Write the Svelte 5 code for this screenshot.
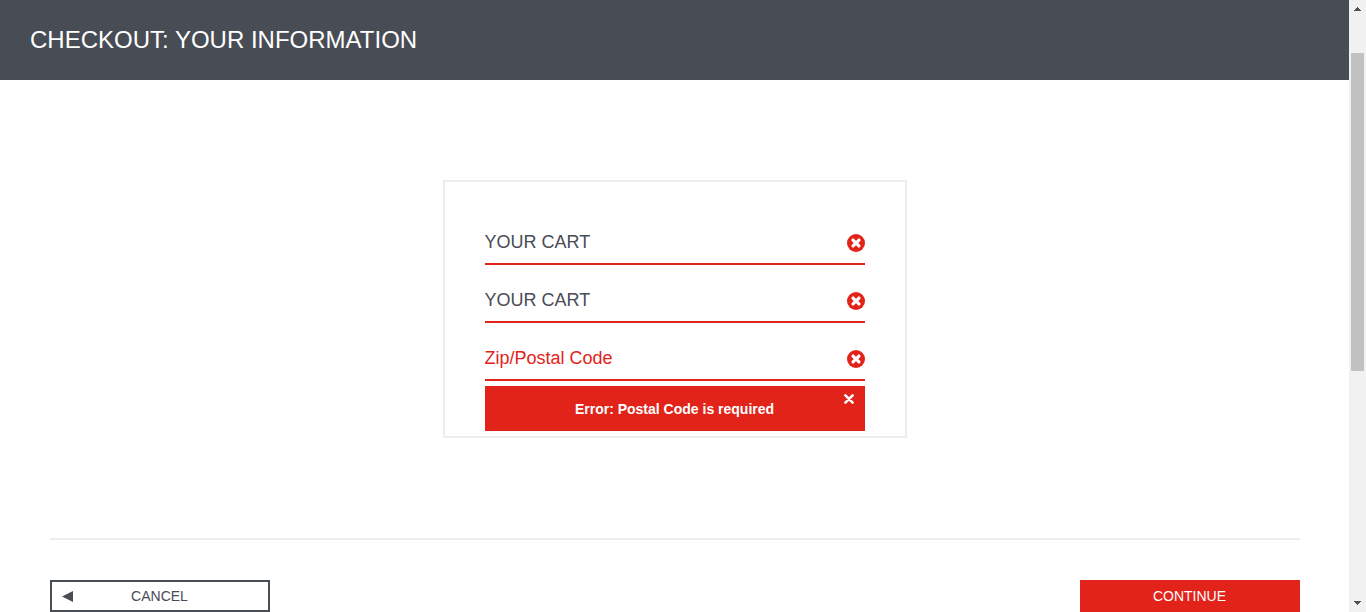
<script>
  let fields = $state([
    { id: 'first-name', label: 'First Name', value: 'YOUR CART' },
    { id: 'last-name', label: 'Last Name', value: 'YOUR CART' },
    { id: 'postal-code', label: 'Zip/Postal Code', value: '' }
  ]);
  let error = $state('Error: Postal Code is required');
</script>

<div class="page">
  <div class="content">
    <header>
      <h1>CHECKOUT: YOUR INFORMATION</h1>
    </header>

    <main>
      <form id="checkout" onsubmit={(e) => e.preventDefault()}>
        {#each fields as field (field.id)}
          <div class="field">
            <input
              id={field.id}
              type="text"
              aria-label={field.label}
              placeholder={field.label}
              bind:value={field.value}
            />
            <svg class="invalid" viewBox="8 8 496 496" aria-hidden="true">
              <circle cx="256" cy="256" r="248" fill="currentColor" />
              <path stroke="#fff" stroke-width="88" stroke-linecap="round" d="M174 174l164 164M338 174L174 338" />
            </svg>
          </div>
        {/each}
        {#if error}
          <div class="error" role="alert">
            <strong>{error}</strong>
            <button type="button" class="dismiss" aria-label="Dismiss" onclick={() => (error = '')}>
              <svg viewBox="0 0 10 10" aria-hidden="true">
                <path stroke="currentColor" stroke-width="2.6" stroke-linecap="round" d="M1.4 1.4l7.2 7.2M8.6 1.4L1.4 8.6" />
              </svg>
            </button>
          </div>
        {/if}
      </form>

      <footer>
        <button type="button" class="action cancel">
          <svg viewBox="0 0 10 10" aria-hidden="true"><path fill="currentColor" d="M10 0v10L0 5z" /></svg>
          <span>CANCEL</span>
        </button>
        <button type="submit" form="checkout" class="action continue">CONTINUE</button>
      </footer>
    </main>
  </div>

  <div class="scrollbar" aria-hidden="true">
    <svg class="arrow" viewBox="0 0 17 17" shape-rendering="crispEdges">
      <path fill="#505050" d="M8 7h1v1h1v1h1v1h1v1H5v-1h1V9h1V8h1z" />
    </svg>
    <div class="track"><div class="thumb"></div></div>
    <svg class="arrow" viewBox="0 0 17 17" shape-rendering="crispEdges">
      <path fill="#505050" d="M5 6h7v1h-1v1h-1v1H9v1H8V9H7V8H6V7H5z" />
    </svg>
  </div>
</div>

<style>
  :global(body) {
    margin: 0;
    background: #fff;
  }

  .page {
    display: flex;
    min-height: 100vh;
    font-family: "Liberation Sans", Arial, sans-serif;
    color: #484c55;
  }

  .content {
    flex: 1;
    min-width: 0;
  }

  header {
    display: flex;
    align-items: center;
    height: 80px;
    padding: 0 30px;
    background: #484c55;
  }

  h1 {
    margin: 0;
    font-size: 24px;
    line-height: 28px;
    font-weight: 400;
    color: #fff;
  }

  main {
    max-width: 1250px;
    margin: 0 auto;
    padding-top: 100px;
  }

  form {
    box-sizing: border-box;
    max-width: 464px;
    margin: 0 auto;
    padding: 41px 40px 5px;
    border: 2px solid #ededed;
  }

  .field {
    display: flex;
    align-items: center;
    height: 40px;
    border-bottom: 2px solid #e2231a;
    color: #e2231a;
  }

  .field + .field {
    margin-top: 16px;
  }

  input {
    flex: 1;
    min-width: 0;
    padding: 0 0 2px;
    border: 0;
    outline: 0;
    background: transparent;
    font: inherit;
    font-size: 18px;
    color: #484c55;
  }

  input::placeholder {
    color: #e2231a;
    opacity: 1;
  }

  .invalid {
    width: 18px;
    height: 18px;
  }

  .error {
    position: relative;
    display: flex;
    align-items: center;
    justify-content: center;
    min-height: 45px;
    margin-top: 5px;
    background: #e2231a;
    color: #fff;
    font-size: 14px;
  }

  .dismiss {
    position: absolute;
    top: 8px;
    right: 11px;
    display: flex;
    padding: 0;
    border: 0;
    background: transparent;
    color: #fff;
    cursor: pointer;
  }

  .dismiss svg {
    width: 10px;
    height: 10px;
  }

  footer {
    display: flex;
    justify-content: space-between;
    margin-top: 100px;
    padding-top: 40px;
    border-top: 2px solid #ededed;
  }

  .action {
    box-sizing: border-box;
    width: 220px;
    height: 32px;
    padding: 0 10px;
    border: 2px solid #484c55;
    border-radius: 0;
    background: #fff;
    color: #484c55;
    font: inherit;
    font-size: 14px;
    cursor: pointer;
  }

  .cancel {
    display: flex;
    align-items: center;
  }

  .cancel svg {
    width: 11px;
    height: 11px;
  }

  .cancel span {
    flex: 1;
    padding-right: 11px;
  }

  .continue {
    border-color: #e2231a;
    background: #e2231a;
    color: #fff;
  }

  .scrollbar {
    position: sticky;
    top: 0;
    display: flex;
    flex-direction: column;
    width: 17px;
    height: 100vh;
    background: #f1f1f1;
  }

  .arrow {
    display: block;
    width: 17px;
    height: 17px;
  }

  .track {
    flex: 1;
    padding: 36px 2px 0;
  }

  .thumb {
    height: 318px;
    background: #c1c1c1;
  }
</style>
